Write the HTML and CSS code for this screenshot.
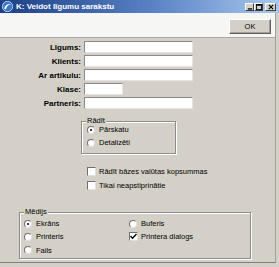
FILE: index.html
```html
<!DOCTYPE html>
<html lang="lv">
<head>
    <meta charset="UTF-8">
    <title>K: Veidot līgumu sarakstu</title>
    <link rel="stylesheet" href="styles.css">
</head>
<body>

    <div class="window">

        <!-- Title bar -->
        <div class="titlebar">
            <svg class="app-icon" width="11" height="11" viewBox="0 0 11 11">
                <circle cx="5.5" cy="5.5" r="5.2" fill="#3a78c8" stroke="#d8e6f6" stroke-width="0.8"/>
                <path d="M2.2 7.5 C3 4 6 2.4 8.8 3.2 C6.4 3.6 4.6 5.2 4 8.4 Z" fill="#ffffff"/>
            </svg>
            <span class="title">K: Veidot līgumu sarakstu</span>
            <div class="caption-btns">
                <span class="cap-btn">
                    <svg width="7" height="7" viewBox="0 0 7 7"><rect x="1" y="5" width="5" height="1.5" fill="#000"/></svg>
                </span>
                <span class="cap-btn">
                    <svg width="7" height="7" viewBox="0 0 7 7"><rect x="0.5" y="0.5" width="6" height="6" fill="none" stroke="#000"/><rect x="0.5" y="0.5" width="6" height="1.5" fill="#000"/></svg>
                </span>
                <span class="cap-btn close">
                    <svg width="7" height="7" viewBox="0 0 7 7"><path d="M1 1 L6 6 M6 1 L1 6" stroke="#000" stroke-width="1.3"/></svg>
                </span>
            </div>
        </div>

        <div class="main">
            <!-- Toolbar -->
            <div class="toolbar">
                <button class="ok-btn">OK</button>
            </div>

            <div class="content">
                <!-- Search fields -->
                <div class="fields">
                    <label>Līgums:</label><input type="text" class="inp">
                    <label>Klients:</label><input type="text" class="inp">
                    <label>Ar artikulu:</label><input type="text" class="inp">
                    <label>Klase:</label><input type="text" class="inp short">
                    <label>Partneris:</label><input type="text" class="inp">
                </div>

                <!-- Rādīt -->
                <div class="group show-group">
                    <span class="legend">Rādīt</span>
                    <div class="opt tall"><span class="radio on"></span>Pārskatu</div>
                    <div class="opt tall"><span class="radio"></span>Detalizēti</div>
                </div>

                <div class="checks">
                    <div class="opt check-row"><span class="check"></span>Rādīt bāzes valūtas kopsummas</div>
                    <div class="opt check-row"><span class="check"></span>Tikai neapstiprinātie</div>
                </div>

                <!-- Mēdijs -->
                <div class="group media-group">
                    <span class="legend">Mēdijs</span>
                    <div class="opt"><span class="radio on"></span>Ekrāns</div>
                    <div class="opt"><span class="radio"></span>Buferis</div>
                    <div class="opt"><span class="radio"></span>Printeris</div>
                    <div class="opt"><span class="check on">
                        <svg width="7" height="7" viewBox="0 0 7 7"><path d="M0.5 3 L2.5 5.2 L6.5 1" fill="none" stroke="#000" stroke-width="1.4"/></svg>
                    </span>Printera dialogs</div>
                    <div class="opt"><span class="radio"></span>Fails</div>
                </div>
            </div>
        </div>
    </div>

</body>
</html>
```

FILE: styles.css
```css
body {
    margin: 0;
    background-color: #d4d0c8;
    font-family: 'Liberation Sans', Arial, sans-serif;
    font-size: 7.5px;
    color: #000;
}

.window {
    width: 279px;
    height: 267px;
    display: flex;
    flex-direction: column;
    background-color: #d4d0c8;
}

/* Title bar */
.titlebar {
    height: 13px;
    display: flex;
    align-items: center;
    background: linear-gradient(to right, #1c3f86, #5a82c4 55%, #a8c8ee);
    color: #fff;
    flex-shrink: 0;
}

.app-icon {
    margin: 0 3px 0 2px;
}

.title {
    font-weight: bold;
    font-size: 8px;
    flex-grow: 1;
}

.caption-btns {
    display: flex;
    margin-right: 3px;
}

.cap-btn {
    width: 9px;
    height: 8px;
    box-sizing: border-box;
    background-color: #d4d0c8;
    border: 1px solid;
    border-color: #fff #404040 #404040 #fff;
    display: flex;
    align-items: center;
    justify-content: center;
}

.cap-btn svg {
    width: 6px;
    height: 6px;
}

.cap-btn.close {
    width: 11px;
    margin-left: 2px;
}

/* Main area */
.main {
    flex-grow: 1;
    display: flex;
    flex-direction: column;
    margin-right: 3px;
    margin-bottom: 4px;
    border-right: 1px solid #a0a0a0;
    border-bottom: 1px solid #808080;
}

.toolbar {
    height: 25px;
    box-sizing: border-box;
    background-color: #f6f6f4;
    border-bottom: 1px solid #a8a8a8;
    display: flex;
    justify-content: flex-end;
    padding: 6px 4px 0 0;
}

.ok-btn {
    width: 42px;
    height: 15px;
    padding: 0;
    font-family: inherit;
    font-size: 7.5px;
    color: #000;
    background-color: #d4d0c8;
    border: 1px solid;
    border-color: #fff #606060 #606060 #fff;
    box-shadow: inset -1px -1px 0 #a0a0a0;
}

.content {
    flex-grow: 1;
    padding-top: 3px;
}

/* Fields */
.fields {
    display: grid;
    grid-template-columns: 81px 109px;
    column-gap: 3px;
    row-gap: 2px;
    align-items: center;
}

.fields label {
    font-weight: bold;
    font-size: 8px;
    text-align: right;
}

.inp {
    width: 109px;
    height: 12px;
    box-sizing: border-box;
    margin: 0;
    background-color: #fff;
    border: 1px solid;
    border-color: #8a8a8a #e4e4e4 #e4e4e4 #8a8a8a;
}

.inp.short {
    width: 39px;
}

/* Group boxes */
.group {
    position: relative;
    box-sizing: border-box;
    border: 1px solid #8c8c8c;
    box-shadow: 1px 1px 0 #fff, inset 1px 1px 0 #fff;
}

.legend {
    position: absolute;
    top: -6px;
    left: 4px;
    padding: 0 1px;
    background-color: #d4d0c8;
    line-height: 10px;
}

.show-group {
    margin: 12px 0 0 81px;
    width: 95px;
    height: 33px;
    padding: 1px 0 0 5px;
}

.media-group {
    margin: 20px 0 0 19px;
    width: 232px;
    height: 47px;
    padding: 5px 0 0 4px;
    display: grid;
    grid-template-columns: 105px auto;
}

.opt {
    display: flex;
    align-items: center;
    height: 11px;
    white-space: nowrap;
}

.opt.tall {
    height: 13px;
}

.checks {
    margin: 10px 0 0 87px;
}

.opt.check-row {
    height: 14px;
}

.radio {
    width: 8px;
    height: 8px;
    box-sizing: border-box;
    border-radius: 50%;
    background-color: #fff;
    border: 1px solid;
    border-color: #707070 #e0e0e0 #e0e0e0 #707070;
    margin-right: 4px;
    position: relative;
}

.radio.on::after {
    content: "";
    position: absolute;
    left: 2px;
    top: 2px;
    width: 2px;
    height: 2px;
    border-radius: 50%;
    background-color: #000;
}

.check {
    width: 9px;
    height: 9px;
    box-sizing: border-box;
    background-color: #fff;
    border: 1px solid;
    border-color: #707070 #e0e0e0 #e0e0e0 #707070;
    margin-right: 3px;
    display: flex;
    align-items: center;
    justify-content: center;
}
```
